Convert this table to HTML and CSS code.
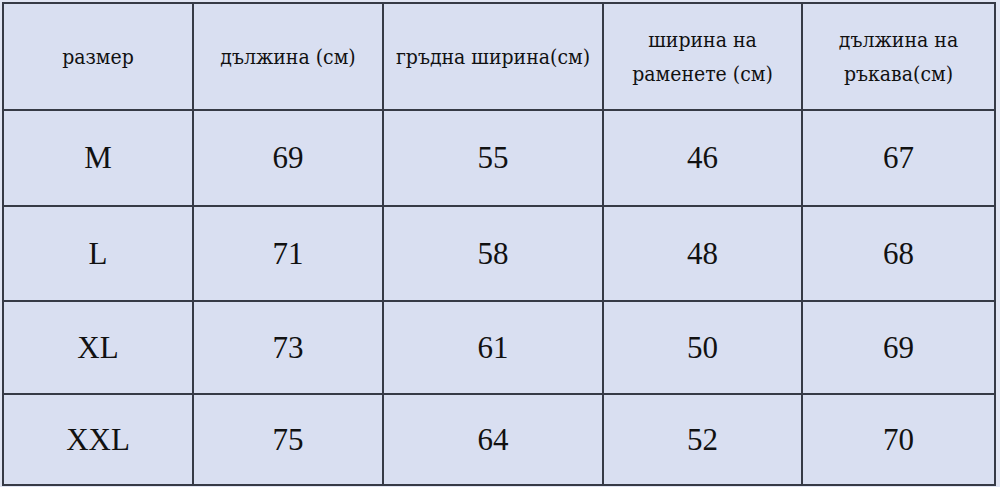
FILE: index.html
```html
<!DOCTYPE html>
<html lang="bg">
<head>
<meta charset="utf-8">
<title>Таблица с размери</title>
<link rel="stylesheet" href="styles.css">
</head>
<body>
<div class="size-table">
  <div class="cell head">размер</div>
  <div class="cell head">дължина (см)</div>
  <div class="cell head">гръдна ширина(см)</div>
  <div class="cell head">ширина на<br>раменете (см)</div>
  <div class="cell head">дължина на<br>ръкава(см)</div>

  <div class="cell val">M</div>
  <div class="cell val">69</div>
  <div class="cell val">55</div>
  <div class="cell val">46</div>
  <div class="cell val">67</div>

  <div class="cell val">L</div>
  <div class="cell val">71</div>
  <div class="cell val">58</div>
  <div class="cell val">48</div>
  <div class="cell val">68</div>

  <div class="cell val">XL</div>
  <div class="cell val">73</div>
  <div class="cell val">61</div>
  <div class="cell val">50</div>
  <div class="cell val">69</div>

  <div class="cell val">XXL</div>
  <div class="cell val">75</div>
  <div class="cell val">64</div>
  <div class="cell val">52</div>
  <div class="cell val">70</div>
</div>
</body>
</html>
```
FILE: styles.css
```css
html, body {
  margin: 0;
  padding: 0;
  background: #e1e5f3;
}
body {
  padding: 2px 0 0 2px;
  width: 1000px;
  height: 487px;
  box-sizing: border-box;
  overflow: hidden;
}
.size-table {
  display: grid;
  grid-template-columns: 188px 188px 218px 197px 191px;
  grid-template-rows: 105px 94px 93px 91px 89px;
  gap: 2px;
  padding: 2px;
  background: #363a46;
  width: max-content;
}
.cell {
  background: #d9dff1;
  display: flex;
  align-items: center;
  justify-content: center;
  text-align: center;
  color: #111;
}
.head {
  font-family: "DejaVu Serif Condensed", "DejaVu Serif", serif;
  font-stretch: condensed;
  font-size: 21px;
  line-height: 34px;
}
.val {
  font-family: "Liberation Serif", serif;
  font-size: 31px;
}
```
